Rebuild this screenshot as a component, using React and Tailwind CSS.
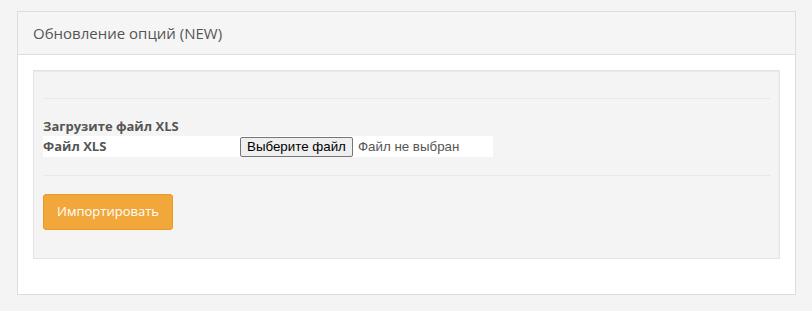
import React from "react";

export default function App() {
  return (
    <div className="min-h-[311px] w-[812px] bg-[#f4f4f4] pt-[11px] pl-[17px]" style={{ fontFamily: "'Open Sans', sans-serif" }}>
      <div className="w-[779px] border border-[#dddddd] bg-white">
        {/* HEADER */}
        <div className="h-[43px] bg-[#f5f5f5] border-b border-[#dddddd] pl-[15px] flex items-center">
          <span className="text-[15px] text-[#555555]">Обновление опций (NEW)</span>
        </div>

        {/* BODY */}
        <div className="px-[15px] pt-[15px] pb-[35px]">
          <div className="border border-[#e3e3e3] bg-[#f4f4f4] shadow-[inset_0_1px_1px_rgba(0,0,0,0.05)] px-[9px] pt-[27px] pb-[28px]">
            <div className="border-t border-[#e8e8e8]" />

            <div className="mt-[18px] text-[13px] font-bold leading-[19px] text-[#555555]">
              Загрузите файл XLS
            </div>
            <div className="flex items-center h-[21px] w-[450px] bg-white">
              <span className="w-[197px] text-[13px] font-bold text-[#555555]">Файл XLS</span>
              <div className="flex items-center" style={{ fontFamily: "'Liberation Sans', Arial, sans-serif" }}>
                <button className="h-[20px] px-[6px] text-[13.33px] text-black bg-[#efefef] border border-[#767676] rounded-[2px] leading-none">
                  Выберите файл
                </button>
                <span className="ml-[5px] text-[13.33px] text-[#555555]">Файл не выбран</span>
              </div>
            </div>

            <div className="mt-[18px] border-t border-[#e8e8e8]" />

            <button className="mt-[18px] h-[36px] w-[130px] bg-[#f2a73b] border border-[#eb9a22] rounded-[3px] text-white text-[13px]">
              Импортировать
            </button>
          </div>
        </div>
      </div>
    </div>
  );
}
